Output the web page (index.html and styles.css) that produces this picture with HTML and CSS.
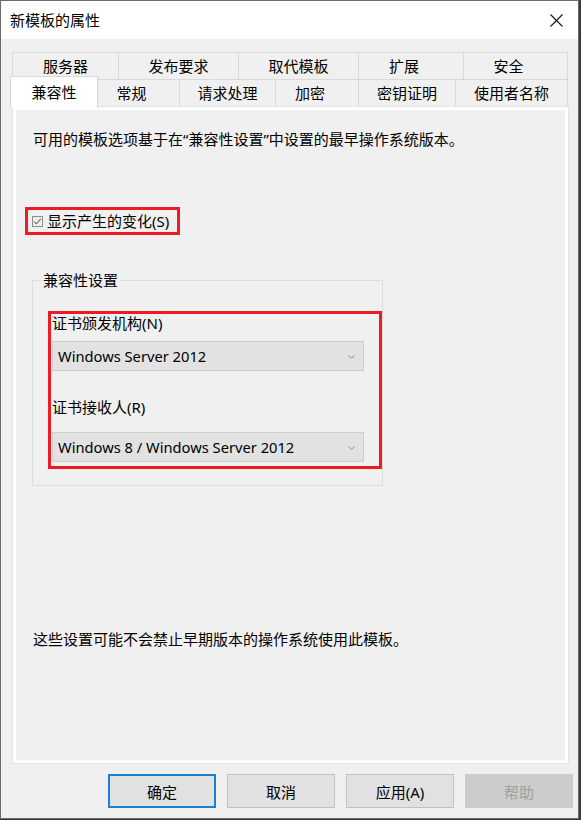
FILE: index.html
```html
<!DOCTYPE html>
<html lang="zh-CN">
<head>
    <meta charset="UTF-8">
    <title>新模板的属性</title>
    <link rel="stylesheet" href="styles.css">
</head>
<body>
    <div class="window">
        <div class="titlebar">
            <span class="title">新模板的属性</span>
            <svg class="close" width="13" height="13" viewBox="0 0 13 13">
                <path d="M0.5 0.5L12.5 12.5M12.5 0.5L0.5 12.5" stroke="#111" stroke-width="1.1" fill="none"/>
            </svg>
        </div>

        <div class="main">
            <div class="tabs">
                <div class="tab-row back">
                    <div class="tab">服务器</div>
                    <div class="tab">发布要求</div>
                    <div class="tab">取代模板</div>
                    <div class="tab short">扩展</div>
                    <div class="tab short">安全</div>
                </div>
                <div class="tab-row front">
                    <div class="tab active">兼容性</div>
                    <div class="tab short">常规</div>
                    <div class="tab">请求处理</div>
                    <div class="tab short">加密</div>
                    <div class="tab">密钥证明</div>
                    <div class="tab">使用者名称</div>
                </div>
            </div>

            <div class="panel">
                <p class="desc">可用的模板选项基于在“兼容性设置”中设置的最早操作系统版本。</p>

                <label class="highlight check-row">
                    <span class="checkbox">
                        <svg width="9" height="9" viewBox="0 0 9 9">
                            <path d="M1.2 4.6L3.4 6.8L7.8 1.8" stroke="#6b6b6b" stroke-width="1.1" fill="none"/>
                        </svg>
                    </span>
                    <span>显示产生的变化(S)</span>
                </label>

                <fieldset class="group">
                    <legend>兼容性设置</legend>
                    <div class="highlight combos">
                        <div class="field-label">证书颁发机构(N)</div>
                        <div class="combo first">
                            <span>Windows Server 2012</span>
                            <svg class="chevron" width="7" height="4" viewBox="0 0 7 4">
                                <path d="M0.5 0.5L3.5 3.3L6.5 0.5" stroke="#8a8a8a" stroke-width="1" fill="none"/>
                            </svg>
                        </div>
                        <div class="field-label second">证书接收人(R)</div>
                        <div class="combo second">
                            <span>Windows 8 / Windows Server 2012</span>
                            <svg class="chevron" width="7" height="4" viewBox="0 0 7 4">
                                <path d="M0.5 0.5L3.5 3.3L6.5 0.5" stroke="#8a8a8a" stroke-width="1" fill="none"/>
                            </svg>
                        </div>
                    </div>
                </fieldset>

                <p class="note">这些设置可能不会禁止早期版本的操作系统使用此模板。</p>
            </div>

            <div class="buttons">
                <button class="btn default">确定</button>
                <button class="btn">取消</button>
                <button class="btn">应用(A)</button>
                <button class="btn" disabled>帮助</button>
            </div>
        </div>
    </div>
</body>
</html>
```

FILE: styles.css
```css
:root {
    --face: #f0f0f0;
    --tab-line: #d9d9d9;
    --mark: #ed1c24;
    --text: #000;
}

body {
    margin: 0;
    background: #3b3b3b;
    font-family: "Noto Sans", "Noto Sans CJK SC", sans-serif;
    font-size: 15px;
    color: var(--text);
}

.window {
    width: 579px;
    height: 819px;
    box-sizing: border-box;
    border: 1px solid #6b6b6b;
    background: var(--face);
}

.titlebar {
    height: 38px;
    background: #fff;
    display: flex;
    align-items: center;
    justify-content: space-between;
    padding: 0 15px 0 9px;
}

.title {
    line-height: 20px;
}

.main {
    padding: 13px 0 0 11px;
}

/* tab strip, two rows */
.tab-row {
    display: flex;
    height: 27px;
}

.tab {
    box-sizing: border-box;
    height: 27px;
    border-top: 1px solid var(--tab-line);
    border-left: 1px solid var(--tab-line);
    display: flex;
    align-items: center;
    justify-content: center;
    line-height: 20px;
    background: var(--face);
}

/* two-character labels sit a little left of centre */
.tab.short {
    padding-right: 14px;
}

.tab:last-child {
    border-right: 1px solid var(--tab-line);
}

.back .tab:nth-child(1) { width: 106px; }
.back .tab:nth-child(2) { width: 120px; }
.back .tab:nth-child(3) { width: 120px; }
.back .tab:nth-child(4) { width: 105px; }
.back .tab:nth-child(5) { width: 105px; }

.front .tab:nth-child(2) { width: 81px; }
.front .tab:nth-child(3) { width: 96px; }
.front .tab:nth-child(4) { width: 83px; }
.front .tab:nth-child(5) { width: 97px; }
.front .tab:nth-child(6) { width: 113px; }

.tab.active {
    position: relative;
    z-index: 1;
    width: 88px;
    height: 32px;
    margin: -3px 0 -2px -2px;
    background: #fff;
    border-right: 1px solid var(--tab-line);
    padding-bottom: 1px;
}

.tab.active + .tab {
    border-left: none;
}

/* page body */
.panel {
    box-sizing: border-box;
    width: 557px;
    height: 658px;
    border: 1px solid #e2e2e2;
    box-shadow: inset 0 0 0 3px #fff;
    padding: 22px 0 114px 12px;
    display: flex;
    flex-direction: column;
    align-items: flex-start;
}

.desc,
.note {
    margin: 0 0 0 8px;
    line-height: 20px;
}

.note {
    margin-top: auto;
}

.highlight {
    border: 3px solid var(--mark);
    box-sizing: border-box;
}

.check-row {
    margin-top: 58px;
    width: 155px;
    height: 28px;
    display: flex;
    align-items: center;
    padding-left: 4px;
    line-height: 20px;
}

.checkbox {
    width: 11px;
    height: 11px;
    box-sizing: border-box;
    border: 1px solid #8c8c8c;
    display: flex;
    align-items: center;
    justify-content: center;
    margin: 1px 4px 0 0;
}

.group {
    margin: 35px 0 0 7px;
    padding: 0 0 16px 15px;
    width: 351px;
    box-sizing: border-box;
    border: 1px solid #dcdcdc;
    min-inline-size: 0;
}

.group legend {
    margin-left: -7px;
    padding: 0 2px;
    line-height: 20px;
}

.combos {
    margin-top: 21px;
    width: 334px;
    padding: 0 0 4px 1px;
}

.field-label {
    line-height: 18px;
}

.field-label.second {
    margin-top: 27px;
}

.combo {
    box-sizing: border-box;
    width: 312px;
    height: 30px;
    margin-top: 9px;
    background: #e2e2e2;
    border: 1px solid #cdcdcd;
    display: flex;
    align-items: center;
    justify-content: space-between;
    padding: 0 8px 0 5px;
    font-size: 14.7px;
    line-height: 20px;
}

.combo.second {
    margin-top: 16px;
}

.chevron {
    margin-top: 1px;
}

/* dialog buttons */
.buttons {
    display: flex;
    justify-content: flex-end;
    gap: 11px;
    margin-top: 10px;
    padding-right: 5px;
}

.btn {
    width: 108px;
    height: 34px;
    box-sizing: border-box;
    background: #e1e1e1;
    border: 1px solid #c2c2c2;
    font-family: inherit;
    font-size: 15px;
    color: var(--text);
    padding: 0;
}

.btn.default {
    border: 2px solid #1a7fd6;
}

.btn:disabled {
    background: #cccccc;
    border-color: #cccccc;
    color: #a0a0a0;
}
```
